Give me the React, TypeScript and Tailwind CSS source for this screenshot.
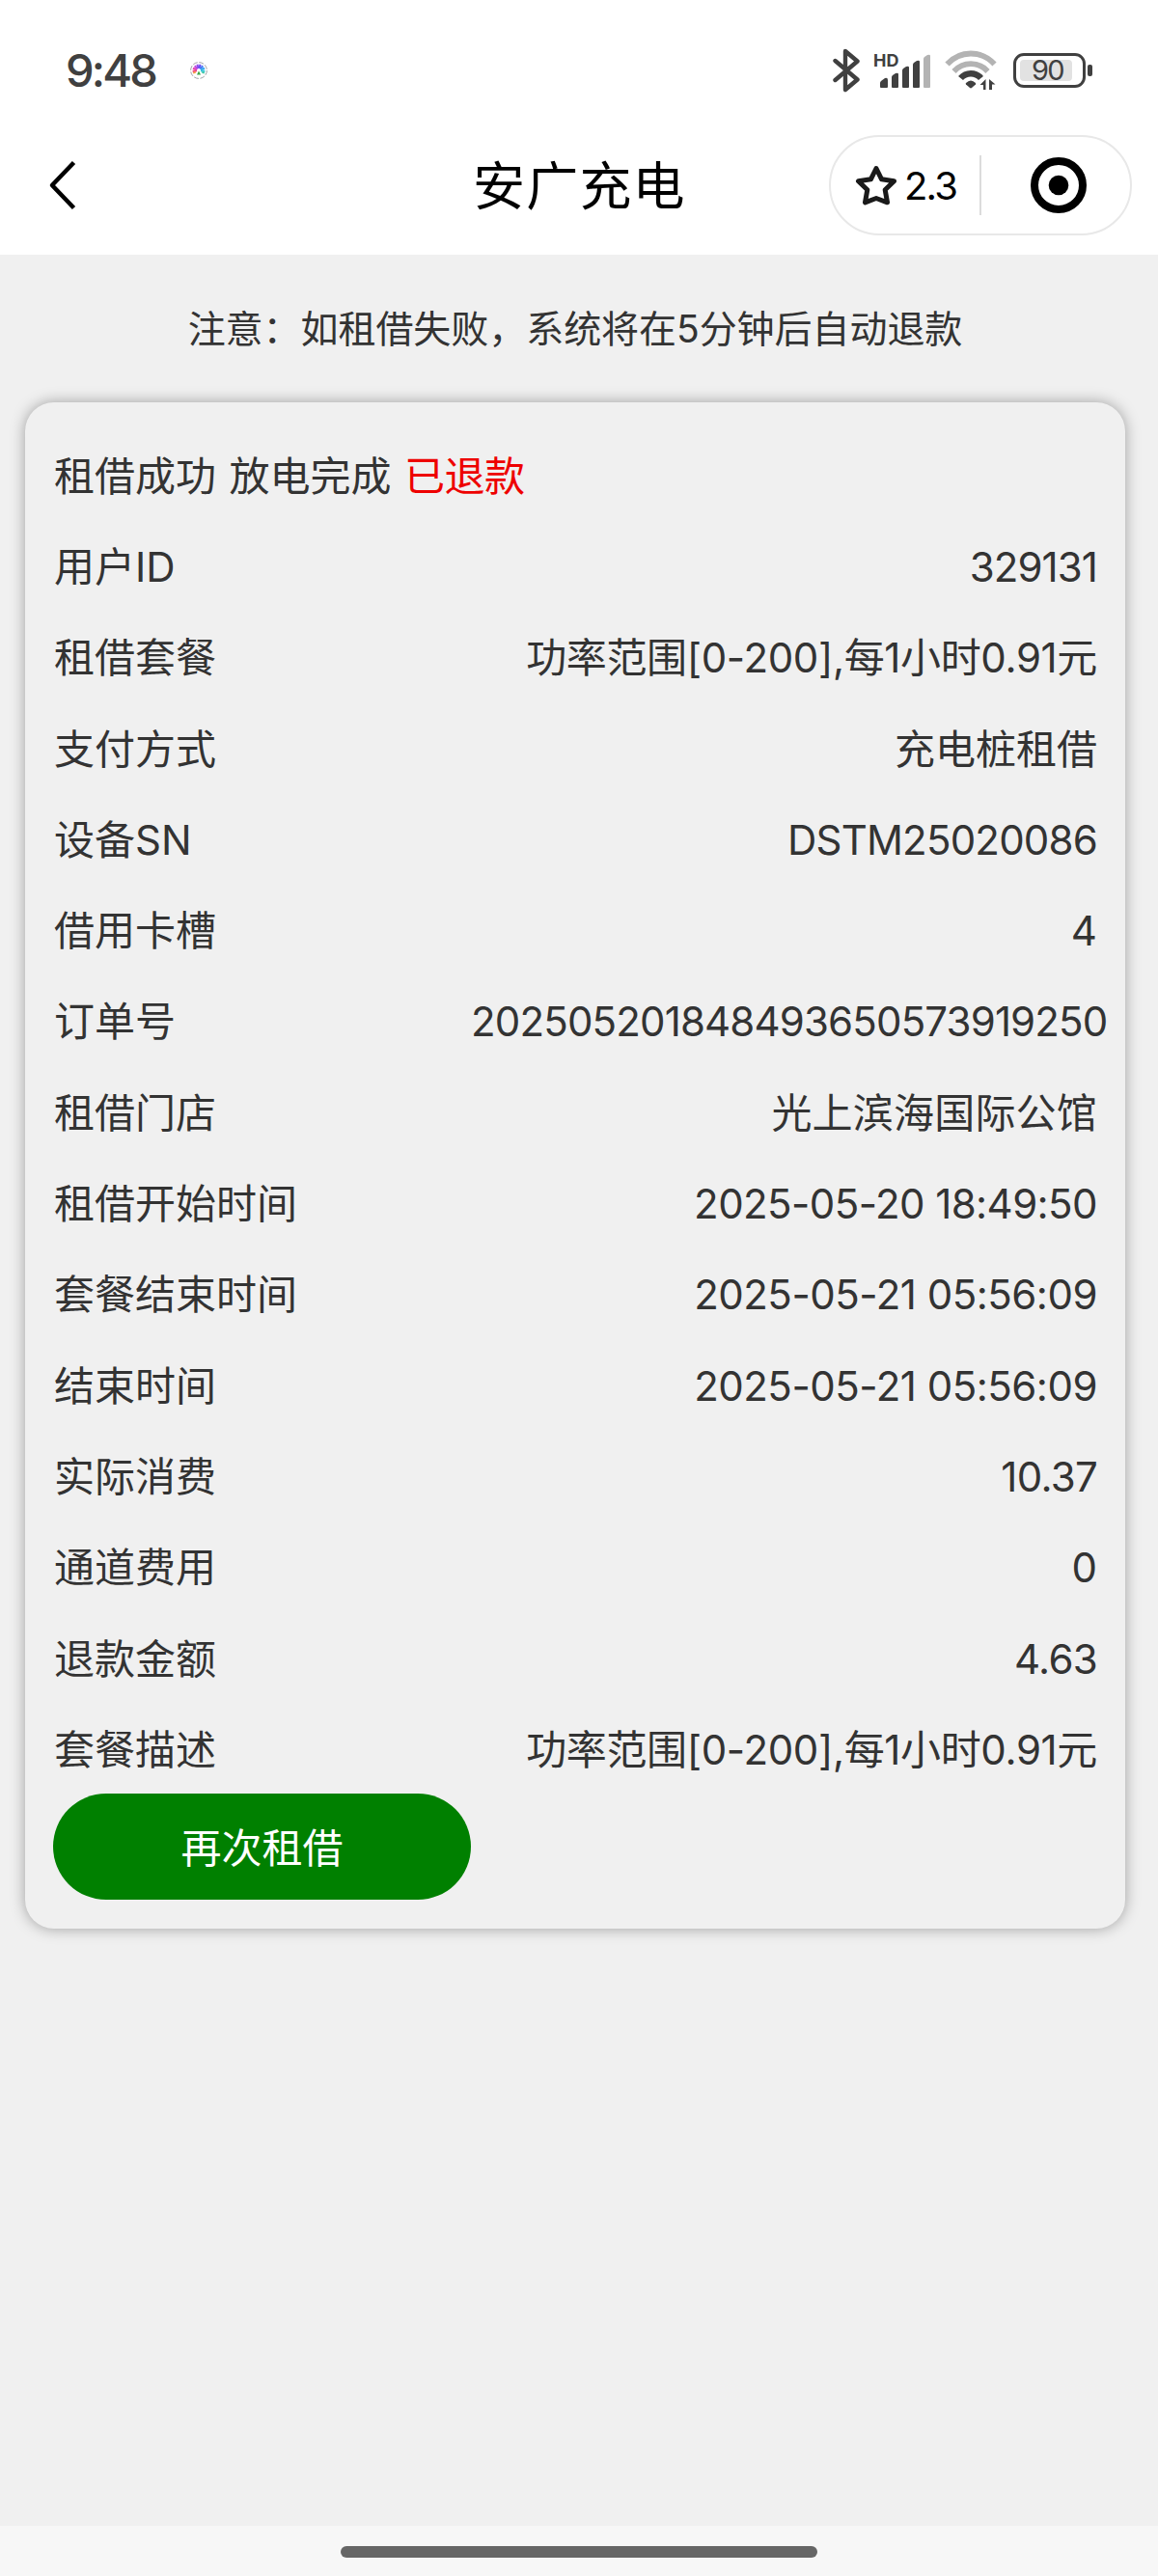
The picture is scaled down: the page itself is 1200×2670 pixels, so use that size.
import clsx from 'clsx';
import React from 'react';

interface OrderField {
  label: string;
  value: string;
  valueClassName?: string;
}

const fields: OrderField[] = [
  { label: '用户ID', value: '329131', valueClassName: 'tracking-[-0.9px]' },
  { label: '租借套餐', value: '功率范围[0-200],每1小时0.91元', valueClassName: 'tracking-[-0.35px]' },
  { label: '支付方式', value: '充电桩租借' },
  { label: '设备SN', value: 'DSTM25020086', valueClassName: 'tracking-[-0.8px]' },
  { label: '借用卡槽', value: '4' },
  { label: '订单号', value: '202505201848493650573919250', valueClassName: 'tracking-[-0.84px]' },
  { label: '租借门店', value: '光上滨海国际公馆', valueClassName: 'tracking-[0.2px]' },
  { label: '租借开始时间', value: '2025-05-20 18:49:50', valueClassName: 'tracking-[-0.58px]' },
  { label: '套餐结束时间', value: '2025-05-21 05:56:09', valueClassName: 'tracking-[-0.5px]' },
  { label: '结束时间', value: '2025-05-21 05:56:09', valueClassName: 'tracking-[-0.5px]' },
  { label: '实际消费', value: '10.37', valueClassName: 'tracking-[-0.7px]' },
  { label: '通道费用', value: '0' },
  { label: '退款金额', value: '4.63', valueClassName: 'tracking-[-0.7px]' },
  { label: '套餐描述', value: '功率范围[0-200],每1小时0.91元', valueClassName: 'tracking-[-0.35px]' },
];

const petals = ['#f0467a', '#e83fb0', '#c04be0', '#8a4bf0', '#6a50f5', '#4a7af5', '#35a5f0', '#35c5d8'];

const AppBadge: React.FC = () => (
  <svg className="ml-[36px] mt-[1px] h-[18px] w-[18px]" viewBox="0 0 18 18" fill="none">
    <circle cx="9" cy="9" r="8.4" fill="#fff" stroke="#8a8a92" strokeWidth="0.8" strokeDasharray="5 1.6" />
    {petals.map((color, i) => (
      <path key={color} d="M9 7V2.6" stroke={color} strokeWidth="2.1" transform={`rotate(${-98 + i * 28} 9 9)`} />
    ))}
    <path d="M3.2 11.7l2.6-1" stroke="#f59a3c" strokeWidth="1.6" />
    <path d="M12.2 10.7l2.6 1" stroke="#3cc8a0" strokeWidth="1.6" />
    <path d="M9 9.5l2 4H7z" fill="#3aa648" />
  </svg>
);

const BluetoothIcon: React.FC = () => (
  <svg className="h-[46px] w-[30px]" viewBox="0 0 30 46" fill="none" stroke="#404040" strokeWidth="4.4" strokeLinejoin="round" strokeLinecap="round">
    <path d="M3.500 13L26.500 32.500 14 43V3l12.500 10.500L3.500 33" />
  </svg>
);

const SignalIcon: React.FC = () => (
  <svg className="ml-[13px] h-[37px] w-[60px] overflow-visible" viewBox="0 0 60 37" fill="#404040">
    <path d="M7 36v-4q0-1 1-2l4-3q3-1 3 2v7q0 1-1 1H8q-1 0-1-1z" />
    <path d="M19 26q0-1 1-2l3-2q3-1 3 1v13q0 1-1 1h-5q-1 0-1-1z" />
    <path d="M30 19q0-1 1-2l3-2q3-1 3 1v20q0 1-1 1h-5q-1 0-1-1z" />
    <path d="M41 13q0-1 1-2l3-2q3-1 3 1v26q0 1-1 1h-5q-1 0-1-1z" />
    <path d="M52 7q0-1 1-2l3-2q3-1 3 1v32q0 1-1 1h-5q-1 0-1-1z" fill="#b3b3b3" />
    <text x="0" y="15" fontFamily="Inter, sans-serif" fontSize="18" fontWeight="700">
      HD
    </text>
  </svg>
);

const WifiIcon: React.FC = () => (
  <svg className="ml-[14px] h-[41px] w-[54px]" viewBox="0 0 54 41" fill="none">
    <path d="M2.500 14.500C16-.200 38-.200 51.500 14.500" stroke="#b3b3b3" strokeWidth="5.800" />
    <path d="M9.500 22c9.500-10.500 25.500-10.500 35 0" stroke="#b3b3b3" strokeWidth="5.800" />
    <path d="M16.500 29c5.500-6.500 15.500-6.500 21 0" stroke="#404040" strokeWidth="6.500" />
    <path d="M22 34q5-5 10 0 .500 1 0 1.500L28 39q-1 .800-2 0l-4-3.500q-.600-.700 0-1.500z" fill="#404040" />
    <path d="M42.500 30v11h-2.500v-5h-3.500zM46 41V30l6.500 5.500h-3.500V41z" fill="#404040" />
  </svg>
);

const BatteryIcon: React.FC = () => (
  <div className="ml-[17px] flex items-center">
    <div className="flex h-[36px] w-[75px] items-center rounded-[11px] border-[3.5px] border-[#404040] p-[4px]">
      <div className="flex h-[22px] w-[54px] items-center rounded-[4px] bg-[#e2e2e2]">
        <span className="ml-[12px] text-[29px] leading-none tracking-[-1.8px] text-[#404040]">90</span>
      </div>
    </div>
    <div className="ml-[2px] h-[12px] w-[5px] rounded-[2px] bg-[#404040]" />
  </div>
);

const StatusBar: React.FC = () => (
  <div className="flex h-[124px] items-center pt-[21px] pr-[68px] pl-[68px]">
    <span className="text-[47px] leading-none font-medium tracking-[-2.8px] text-[#404040]">9:48</span>
    <AppBadge />
    <div className="ml-auto flex items-center">
      <BluetoothIcon />
      <SignalIcon />
      <WifiIcon />
      <BatteryIcon />
    </div>
  </div>
);

const NavBar: React.FC = () => (
  <div className="flex h-[140px] items-center pr-[27px] pb-[4px] pl-[50px]">
    <svg className="h-[52px] w-[30px]" viewBox="0 0 30 52" fill="none" stroke="#000" strokeWidth="4.500">
      <path d="M26.500 2.500L4 26l22.500 23.500" strokeLinejoin="round" />
    </svg>
    <h1 className="ml-[410px] pt-[3px] text-[54px] leading-none tracking-[1.2px] whitespace-nowrap text-black">安广充电</h1>
    <div className="ml-auto flex h-[104px] w-[314px] items-center rounded-full border-2 border-[#e8e8e8]">
      <svg className="ml-[25px] h-[42px] w-[44px]" viewBox="0 0 44 42" fill="none" stroke="#1a1a1a" strokeWidth="5" strokeLinejoin="round">
        <path d="M22 3.500l5.600 11.300 12.900 2-9.300 9 2.300 13L22 34.500 10.500 38.800l2.300-13-9.300-9 12.900-2z" />
      </svg>
      <span className="ml-[7px] pt-[2px] text-[40px] leading-none tracking-[-1.8px] text-black">2.3</span>
      <div className="ml-auto h-[62px] w-[2px] bg-[#dcdcdc]" />
      <svg className="mr-[45px] ml-[51px] h-[58px] w-[58px]" viewBox="0 0 58 58">
        <circle cx="29" cy="29" r="25" fill="none" stroke="#000" strokeWidth="8" />
        <circle cx="29" cy="29" r="10.300" />
      </svg>
    </div>
  </div>
);

const FieldRow: React.FC<OrderField> = ({ label, value, valueClassName }) => (
  <div className="flex h-[94.3px] items-center pt-[3px] text-[42px] leading-none whitespace-nowrap">
    <div className="w-[433px] flex-none pl-[1px]">{label}</div>
    <div className={clsx('w-[649px] flex-none text-right', valueClassName)}>{value}</div>
  </div>
);

export const App: React.FC = () => {
  return (
    <div
      lang="zh-CN"
      className="flex h-[2670px] w-[1200px] flex-col overflow-hidden bg-[#f0f0f0] font-[Inter,'Noto_Sans_CJK_SC',sans-serif] text-[#333333]"
    >
      <header className="h-[264px] flex-none bg-white">
        <StatusBar />
        <NavBar />
      </header>
      <main className="w-[1192px] flex-1">
        <p className="flex h-[153px] items-center justify-center text-[39px] leading-none tracking-[-0.05px]">
          注意：如租借失败，系统将在5分钟后自动退款
        </p>
        <section className="mx-[26px] rounded-[30px] px-[29px] pt-[28px] pb-[30px] shadow-[0_0_15px_rgba(0,0,0,0.34)]">
          <div className="flex h-[94.3px] items-center gap-[13.5px] pt-[3px] pl-[1px] text-[42px] leading-none">
            <span>租借成功</span>
            <span>放电完成</span>
            <span className="tracking-[-0.5px] text-[#ee0000]">已退款</span>
          </div>
          {fields.map((field) => (
            <FieldRow key={field.label} {...field} />
          ))}
          <button type="button" className="block h-[110px] w-[433px] rounded-full bg-[#008000] pt-[3px] text-[42px] leading-none text-white">
            再次租借
          </button>
        </section>
      </main>
      <footer className="flex h-[52px] flex-none items-center justify-center bg-[#f7f7f7]">
        <div className="mt-[1px] h-[12px] w-[494px] rounded-full bg-[#666666]" />
      </footer>
    </div>
  );
};

export default App;
